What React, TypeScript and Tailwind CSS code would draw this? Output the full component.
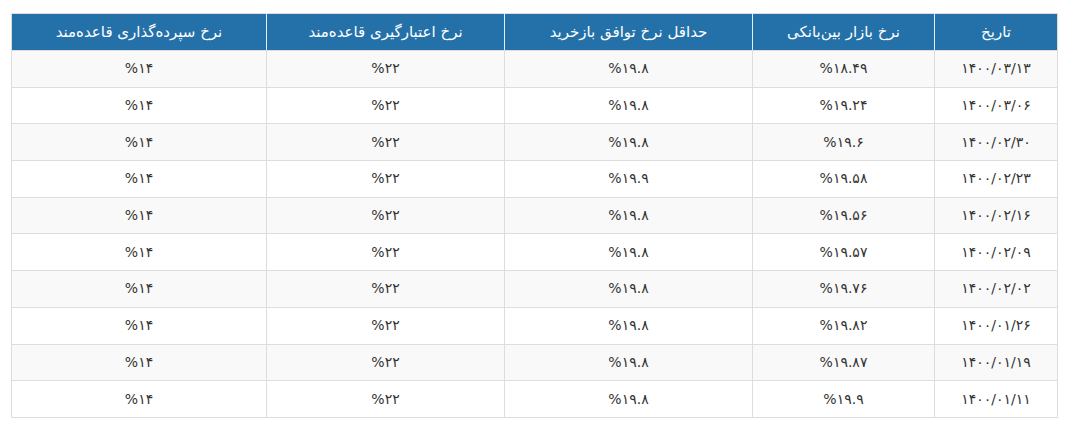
import React from "react";

const rows = [
  ["۱۴۰۰/۰۳/۱۳", "%۱۸.۴۹"],
  ["۱۴۰۰/۰۳/۰۶", "%۱۹.۲۴"],
  ["۱۴۰۰/۰۲/۳۰", "%۱۹.۶"],
  ["۱۴۰۰/۰۲/۲۳", "%۱۹.۵۸"],
  ["۱۴۰۰/۰۲/۱۶", "%۱۹.۵۶"],
  ["۱۴۰۰/۰۲/۰۹", "%۱۹.۵۷"],
  ["۱۴۰۰/۰۲/۰۲", "%۱۹.۷۶"],
  ["۱۴۰۰/۰۱/۲۶", "%۱۹.۸۲"],
  ["۱۴۰۰/۰۱/۱۹", "%۱۹.۸۷"],
  ["۱۴۰۰/۰۱/۱۱", "%۱۹.۹"],
];
const repo = ["%۱۹.۸", "%۱۹.۸", "%۱۹.۸", "%۱۹.۹", "%۱۹.۸", "%۱۹.۸", "%۱۹.۸", "%۱۹.۸", "%۱۹.۸", "%۱۹.۸"];

export default function App() {
  return (
    <div className="bg-white w-[1082px] h-[444px] pt-[13px] pl-[11px]" style={{ fontFamily: '"DejaVu Sans", sans-serif' }}>
      <table dir="rtl" className="w-[1046px] border-collapse table-fixed border border-[#dddddd] text-[#333333]">
        <colgroup>
          <col className="w-[123px]" />
          <col className="w-[182px]" />
          <col className="w-[248px]" />
          <col className="w-[238px]" />
          <col className="w-[255px]" />
        </colgroup>
        <thead>
          <tr className="h-[37px] bg-[#2471a9] text-white text-[15px]">
            <th className="font-normal border-l border-[#e6eef5] border-b border-b-[#dddddd]">تاریخ</th>
            <th className="font-normal border-l border-[#e6eef5] border-b border-b-[#dddddd]">نرخ بازار بین‌بانکی</th>
            <th className="font-normal border-l border-[#e6eef5] border-b border-b-[#dddddd]">حداقل نرخ توافق بازخرید</th>
            <th className="font-normal border-l border-[#e6eef5] border-b border-b-[#dddddd]">نرخ اعتبارگیری قاعده‌مند</th>
            <th className="font-normal border-b border-b-[#dddddd]">نرخ سپرده‌گذاری قاعده‌مند</th>
          </tr>
        </thead>
        <tbody className="text-[14px]">
          {rows.map((r, i) => (
            <tr key={i} className={`h-[36.7px] ${i % 2 === 0 ? "bg-[#f9f9f9]" : "bg-white"}`}>
              <td className="text-center border border-[#dddddd]">{r[0]}</td>
              <td className="text-center border border-[#dddddd]">{r[1]}</td>
              <td className="text-center border border-[#dddddd]">{repo[i]}</td>
              <td className="text-center border border-[#dddddd]">%۲۲</td>
              <td className="text-center border border-[#dddddd]">%۱۴</td>
            </tr>
          ))}
        </tbody>
      </table>
    </div>
  );
}
